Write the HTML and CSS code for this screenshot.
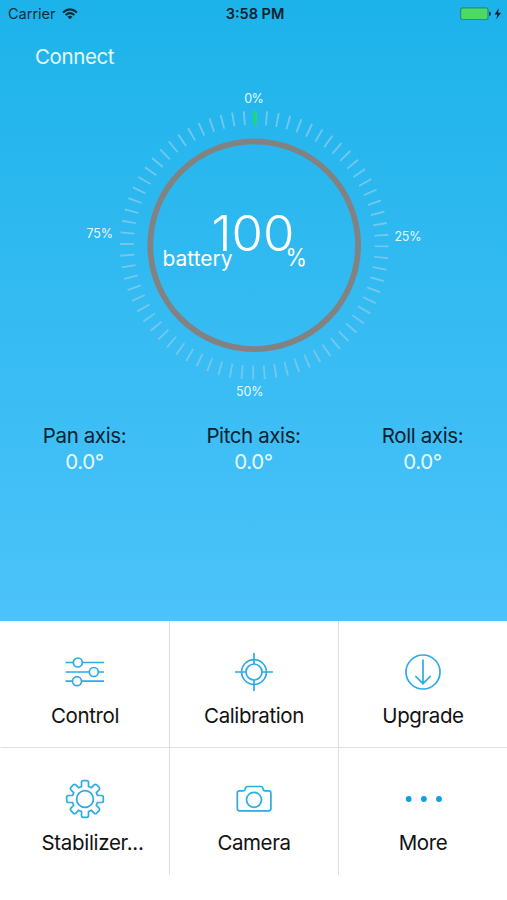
FILE: index.html
```html
<!DOCTYPE html>
<html lang="en">
<head>
<meta charset="utf-8">
<title>Gimbal</title>
<link rel="stylesheet" href="styles.css">
</head>
<body>
<main class="dashboard">
  <header class="status">
    <div class="carrier"><span>Carrier</span>
      <svg width="16" height="12" viewBox="0 0 16 12" fill="none" stroke="#0b2c3b" stroke-width="2"><path d="M1 4.4Q8-1.7 15 4.4M3.6 7.1Q8 3.2 12.4 7.1"/><path d="M5.5 8.7Q8 6.8 10.500 8.700L8 11.300Z" fill="#0b2c3b" stroke="none"/></svg>
    </div>
    <div class="time">3:58 PM</div>
    <svg class="battery" width="42" height="14" viewBox="0 0 42 14"><rect x=".6" y=".9" width="27.400" height="11.600" rx="2" fill="#4cd964" stroke="#238f85" stroke-width="1.200"/><path d="M29 4.500q2 .3 2 2.200t-2 2.200z" fill="#0b3c50"/><path d="M38.800 1.300 34.600 7.500h2.700L36.300 12.200 41 5.800h-2.900z" fill="#06222f"/></svg>
  </header>
  <div class="connect"><span>Connect</span></div>
  <svg class="gauge" width="507" height="330" viewBox="0 80 507 330">
    <g fill="none">
      <circle class="ticks" cx="254.300" cy="245.200" r="127.400" pathLength="720"/>
      <path class="now" d="M255 111v14"/>
      <circle class="ring" cx="254.200" cy="245.200" r="103.900"/>
    </g>
    <g class="scale">
      <text x="244.200" y="103" textLength="19.500">0%</text>
      <text x="394.500" y="241.300" textLength="27">25%</text>
      <text x="236" y="396.300" textLength="27.500">50%</text>
      <text x="86.500" y="237.600" textLength="26.500">75%</text>
    </g>
    <text class="level" x="211.500" y="250.700" textLength="83" lengthAdjust="spacingAndGlyphs">100</text>
    <text class="caption" x="162.500" y="265.500" textLength="70">battery</text>
    <text class="unit" x="285.500" y="266.300" textLength="21.500" lengthAdjust="spacingAndGlyphs">%</text>
  </svg>
  <section class="axes">
    <div><span class="name">Pan axis:</span><span class="value">0.0°</span></div>
    <div><span class="name">Pitch axis:</span><span class="value">0.0°</span></div>
    <div><span class="name">Roll axis:</span><span class="value">0.0°</span></div>
  </section>
</main>
<nav class="menu">
  <a class="item"><svg class="icon" viewBox="0 0 42 42"><path d="M1.500 11.500H9M18.500 11.500H40M1.500 21H25M34.500 21H40M1.500 30.200H8M17.500 30.200H40"/><circle cx="13.800" cy="11.500" r="4.500"/><circle cx="29.800" cy="21" r="4.500"/><circle cx="13" cy="30.200" r="4.500"/></svg><span>Control</span></a>
  <a class="item"><svg class="icon" viewBox="0 0 42 42"><circle cx="21" cy="21" r="12.400"/><circle cx="21" cy="21" r="8"/><path d="M21 2v11M21 29v11M2 21h11M29 21h11"/></svg><span>Calibration</span></a>
  <a class="item"><svg class="icon" viewBox="0 0 42 42"><circle cx="21" cy="21" r="17"/><path d="M21 8.500V33M13.300 25 21 32.700 28.700 25"/></svg><span>Upgrade</span></a>
  <a class="item"><svg class="icon" viewBox="0 0 42 42"><path d="M17.5 8.500V4.500Q17.500 2.700 19.300 2.700H22.700Q24.500 2.700 24.500 4.500V8.500L27.400 9.700 30.200 6.900Q31.500 5.700 32.700 6.900L35.100 9.300Q36.300 10.500 35.100 11.800L32.300 14.600 33.500 17.500H37.500Q39.300 17.500 39.300 19.300V22.700Q39.300 24.500 37.500 24.500H33.500L32.300 27.400 35.100 30.200Q36.300 31.500 35.100 32.700L32.700 35.100Q31.500 36.300 30.200 35.100L27.400 32.300 24.500 33.500V37.500Q24.500 39.300 22.700 39.300H19.300Q17.500 39.300 17.500 37.500V33.500L14.600 32.300 11.800 35.100Q10.500 36.300 9.300 35.100L6.900 32.700Q5.700 31.500 6.900 30.200L9.700 27.400 8.500 24.500H4.500Q2.700 24.500 2.700 22.700V19.300Q2.700 17.500 4.500 17.500H8.500L9.700 14.600 6.900 11.800Q5.700 10.500 6.900 9.300L9.300 6.900Q10.500 5.700 11.800 6.900L14.600 9.700Z"/><circle cx="21" cy="21" r="8.400"/></svg><span class="clipped">Stabilizer...</span></a>
  <a class="item"><svg class="icon" viewBox="0 0 42 42"><path d="M6.600 12.900H10.200Q11.500 12.900 12 11.500L12.600 9.900Q13 8.500 14.500 8.500H28Q29.400 8.500 29.800 9.900L30.300 11.500Q30.700 12.900 32 12.900H35.600Q37.900 12.900 37.900 15.200V30.600Q37.900 32.900 35.600 32.900H6.600Q4.300 32.900 4.300 30.600V15.200Q4.300 12.900 6.600 12.900Z"/><circle cx="21" cy="21.800" r="7.500"/></svg><span>Camera</span></a>
  <a class="item"><svg class="icon dots" viewBox="0 0 42 42"><circle cx="6.700" cy="21" r="2.900"/><circle cx="21.900" cy="21" r="2.900"/><circle cx="37" cy="21" r="2.900"/></svg><span>More</span></a>
</nav>
</body>
</html>
```
FILE: styles.css
```css
* { box-sizing: border-box; }
body {
  margin: 0;
  width: 507px;
  height: 900px;
  overflow: hidden;
  background: #fff;
  color: #111;
  font-family: Inter, "Liberation Sans", sans-serif;
}
.dashboard {
  height: 621px;
  background: linear-gradient(#1cb3ea, #4cc3fa);
}
.status {
  display: grid;
  grid-template-columns: 1fr auto 1fr;
  align-items: center;
  height: 27px;
  padding: 0 5px 0 8px;
  font-size: 14.5px;
  color: #0b2c3b;
}
.carrier { display: flex; align-items: center; gap: 6px; }
.time { font-weight: 600; color: #06222f; }
.battery { justify-self: end; }
.connect {
  height: 53px;
  padding: 17px 0 0 35px;
  font-size: 20.5px;
  line-height: 26px;
  letter-spacing: -.4px;
  color: #e6f8ff;
}
.gauge { display: block; }
.ticks {
  stroke: #75c8ed;
  stroke-width: 14px;
  stroke-dasharray: 1.6 8.4;
  stroke-dashoffset: -.2;
}
.now { stroke: #18dc68; stroke-width: 3px; }
.ring { stroke: #828282; stroke-width: 5.8px; }
.gauge text { fill: #fff; }
.gauge .scale text { font-size: 12.5px; fill: #e6f8ff; }
.gauge .level { font-size: 49px; font-weight: 300; }
.gauge .caption { font-size: 21px; }
.gauge .unit { font-size: 24px; }
.axes {
  display: grid;
  grid-template-columns: repeat(3, 1fr);
  padding: 13px 0 0;
  text-align: center;
  font-size: 20.5px;
  line-height: 26px;
  letter-spacing: -.4px;
}
.axes span { display: block; }
.name { color: #07222f; }
.value { color: #e9f9ff; }
.menu {
  display: grid;
  grid-template-columns: repeat(3, 1fr);
  grid-template-rows: 127px 127px;
}
.item {
  display: flex;
  flex-direction: column;
  align-items: center;
  padding-top: 30px;
  border-left: 1px solid #dedede;
  font-size: 20.5px;
  line-height: 26px;
  letter-spacing: -.4px;
}
.item:nth-child(3n+1) { border-left-color: transparent; }
.item:nth-child(-n+3) { border-bottom: 1px solid #dedede; }
.item span { margin-top: 10px; }
.item .clipped { padding-left: 15px; letter-spacing: -.3px; }
.icon {
  width: 42px;
  height: 42px;
  fill: none;
  stroke: #2cabe5;
  stroke-width: 1.7px;
}
.dots { fill: #109fe0; stroke: none; }
```
